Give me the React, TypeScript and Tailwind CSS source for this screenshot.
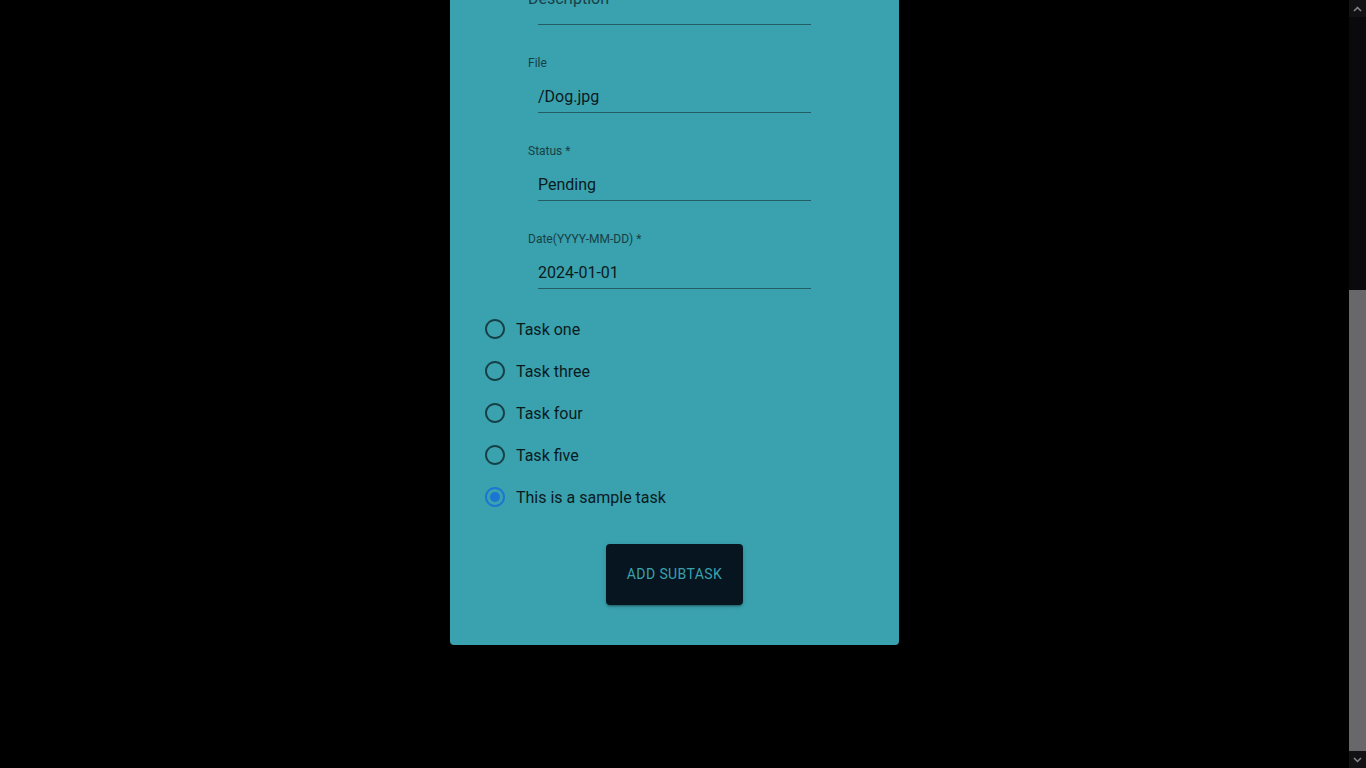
import React, { useLayoutEffect, useRef } from "react";

function Field({ label, value, first }: { label: string; value: string; first?: boolean }) {
  return (
    <div className={first ? "" : "mt-[29px]"}>
      <div className="relative top-[1px] h-4 text-[12px] leading-4 text-[#174046]">{label}</div>
      <div className="ml-[10px] w-[273px] border-b border-[#225d65] pt-[17px] pb-[6px]">
        <div className="h-[19px] text-[16px] leading-[19px] text-[#0a1b1e]">{value}</div>
      </div>
    </div>
  );
}

function EmptyField({ label }: { label: string }) {
  return (
    <div className="relative mt-[29px]">
      <div className="h-4" />
      <span className="absolute left-0 top-[23px] text-[16px] leading-[19px] text-[#174046]">{label}</span>
      <div className="ml-[10px] w-[273px] border-b border-[#225d65] pt-[17px] pb-[6px]">
        <div className="h-[19px]" />
      </div>
    </div>
  );
}

function Radio({ label, checked }: { label: string; checked?: boolean }) {
  return (
    <label className="flex h-[42px] items-center">
      <span className="flex h-[42px] w-[42px] items-center justify-center">
        <svg width="24" height="24" viewBox="0 0 24 24">
          <path
            fill={checked ? "#1976d2" : "#174046"}
            d="M12 2C6.48 2 2 6.48 2 12s4.48 10 10 10 10-4.48 10-10S17.52 2 12 2zm0 18c-4.42 0-8-3.58-8-8s3.58-8 8-8 8 3.58 8 8-3.58 8-8 8z"
          />
          {checked && <circle cx="12" cy="12" r="5" fill="#1976d2" />}
        </svg>
      </span>
      <span className="relative top-[1px] text-[16px] leading-6 text-[#0a1b1e]">{label}</span>
    </label>
  );
}

function FakeScrollbar() {
  return (
    <div className="flex h-screen w-[17px] shrink-0 flex-col bg-[#0a0a0c]">
      <div className="flex h-[17px] items-center justify-center bg-[#121214]">
        <svg width="9" height="6" viewBox="0 0 9 6">
          <path d="M1 5L4.5 1.5L8 5" stroke="#8a8a8e" strokeWidth="1.5" fill="none" />
        </svg>
      </div>
      <div className="h-[273px]" />
      <div className="flex-1 bg-[#68686a]" />
      <div className="flex h-[17px] items-center justify-center bg-[#121214]">
        <svg width="9" height="6" viewBox="0 0 9 6">
          <path d="M1 1L4.5 4.5L8 1" stroke="#8a8a8e" strokeWidth="1.5" fill="none" />
        </svg>
      </div>
    </div>
  );
}

export default function App() {
  const ref = useRef<HTMLDivElement>(null);
  useLayoutEffect(() => {
    const el = ref.current;
    if (el) el.scrollTop = el.scrollHeight;
    const t = setTimeout(() => {
      if (el) el.scrollTop = el.scrollHeight;
    }, 0);
    return () => clearTimeout(t);
  }, []);

  return (
    <div
      className="flex h-screen overflow-hidden bg-black"
      style={{ fontFamily: "Roboto, 'Liberation Sans', sans-serif" }}
    >
      <div ref={ref} className="h-screen flex-1 overflow-y-scroll [scrollbar-width:none]">
        <div className="pt-[40px] pb-[123px]">
          <div className="mx-auto w-[449px] rounded bg-[#3aa1ae] pt-[24px] pb-[40px]">
            <h2 className="mb-[61px] h-8 pl-[78px] text-2xl leading-8 text-[#0a1b1e]">Add Subtask</h2>
            <div className="pl-[78px]">
              <Field first label="Task *" value="Sample task" />
              <Field label="Title *" value="Subtask" />
              <Field label="Priority" value="Normal" />
              <EmptyField label="Description" />
              <Field label="File" value="/Dog.jpg" />
              <Field label="Status *" value="Pending" />
              <Field label="Date(YYYY-MM-DD) *" value="2024-01-01" />
            </div>
            <div className="mt-[19px] pl-[24px]">
              <Radio label="Task one" />
              <Radio label="Task three" />
              <Radio label="Task four" />
              <Radio label="Task five" />
              <Radio label="This is a sample task" checked />
            </div>
            <button className="mx-auto mt-[26px] block h-[61px] w-[137px] rounded bg-[#061520] text-[14px] uppercase tracking-[0.4px] text-[#3aa1ae] shadow-[0_3px_1px_-2px_rgba(0,0,0,0.2),0_2px_2px_0_rgba(0,0,0,0.14),0_1px_5px_0_rgba(0,0,0,0.12)]">
              Add Subtask
            </button>
          </div>
        </div>
      </div>
      <FakeScrollbar />
    </div>
  );
}
